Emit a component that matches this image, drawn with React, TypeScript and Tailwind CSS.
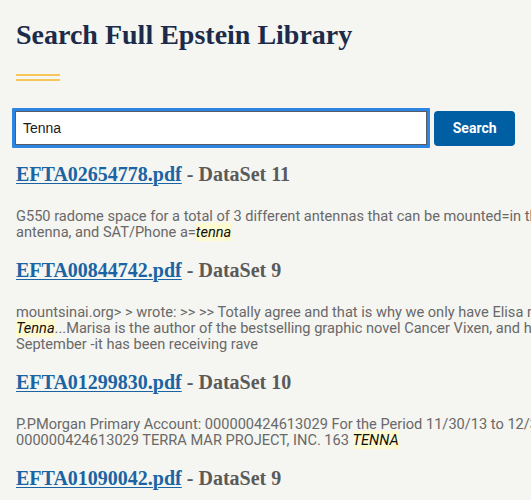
import React from "react";

type Part = { text: string; hit?: boolean };

type Result = {
  file: string;
  dataset: string;
  snippet: Part[][];
};

const results: Result[] = [
  {
    file: "EFTA02654778.pdf",
    dataset: "DataSet 11",
    snippet: [
      [{ text: "G550 radome space for a total of 3 different antennas that can be mounted=in the" }],
      [{ text: "antenna, and SAT/Phone a=" }, { text: "tenna", hit: true }],
    ],
  },
  {
    file: "EFTA00844742.pdf",
    dataset: "DataSet 9",
    snippet: [
      [{ text: "mountsinai.org> > wrote: >> >> Totally agree and that is why we only have Elisa meet" }],
      [{ text: "Tenna", hit: true }, { text: "...Marisa is the author of the bestselling graphic novel Cancer Vixen, and her" }],
      [{ text: "September -it has been receiving rave" }],
    ],
  },
  {
    file: "EFTA01299830.pdf",
    dataset: "DataSet 10",
    snippet: [
      [{ text: "P.PMorgan Primary Account: 000000424613029 For the Period 11/30/13 to 12/31/13" }],
      [{ text: "000000424613029 TERRA MAR PROJECT, INC. 163 " }, { text: "TENNA", hit: true }],
    ],
  },
  {
    file: "EFTA01090042.pdf",
    dataset: "DataSet 9",
    snippet: [[{ text: "" }]],
  },
];

const serif = "font-['Liberation_Serif',serif]";

export default function App() {
  return (
    <div className="min-h-screen w-[531px] overflow-hidden bg-[#f5f5f1]">
      <div className="px-4 pt-[17px]">
        <h1 className={`${serif} text-[28px] font-bold leading-[36px] text-[#1c2b4a]`}>
          Search Full Epstein Library
        </h1>
        <div className="mt-[21px] flex w-[44px] flex-col gap-[3px]">
          <div className="h-[2px] bg-[#f8c75a]" />
          <div className="h-[2px] bg-[#f8c75a]" />
        </div>

        <form className="mt-[27px] flex items-center gap-[4px]" onSubmit={(e) => e.preventDefault()}>
          <div className="-ml-[4px] w-[420px] rounded-[1px] border-[3px] border-[#2f86e2] bg-white">
            <input
              defaultValue="Tenna"
              className="h-[34px] w-full border border-[#565c65] bg-white px-[7px] font-['Liberation_Sans',sans-serif] text-[14px] text-[#1b1b1b] outline-none"
            />
          </div>
          <button
            type="submit"
            className="h-[35px] w-[81px] rounded-[4px] bg-[#005ea2] font-['Roboto',sans-serif] text-[14px] font-bold text-white"
          >
            Search
          </button>
        </form>

        <div className="mt-[14px] flex flex-col gap-[18px]">
          {results.map((r) => (
            <div key={r.file}>
              <h3 className={`${serif} whitespace-nowrap text-[20px] font-bold leading-[24px] text-[#5a5a5a]`}>
                <a href="#" className="text-[#1a64a3] underline decoration-1 underline-offset-2">
                  {r.file}
                </a>{" "}
                - {r.dataset}
              </h3>
              <div className="mt-[22px] font-['Roboto',sans-serif] text-[14.6px] leading-[16px] text-[#696969]">
                {r.snippet.map((line, i) => (
                  <div key={i} className="whitespace-nowrap">
                    {line.map((p, j) =>
                      p.hit ? (
                        <em key={j} className="bg-[#fffbd1] text-[#111]">
                          {p.text}
                        </em>
                      ) : (
                        <span key={j}>{p.text}</span>
                      )
                    )}
                  </div>
                ))}
              </div>
            </div>
          ))}
        </div>
      </div>
    </div>
  );
}
